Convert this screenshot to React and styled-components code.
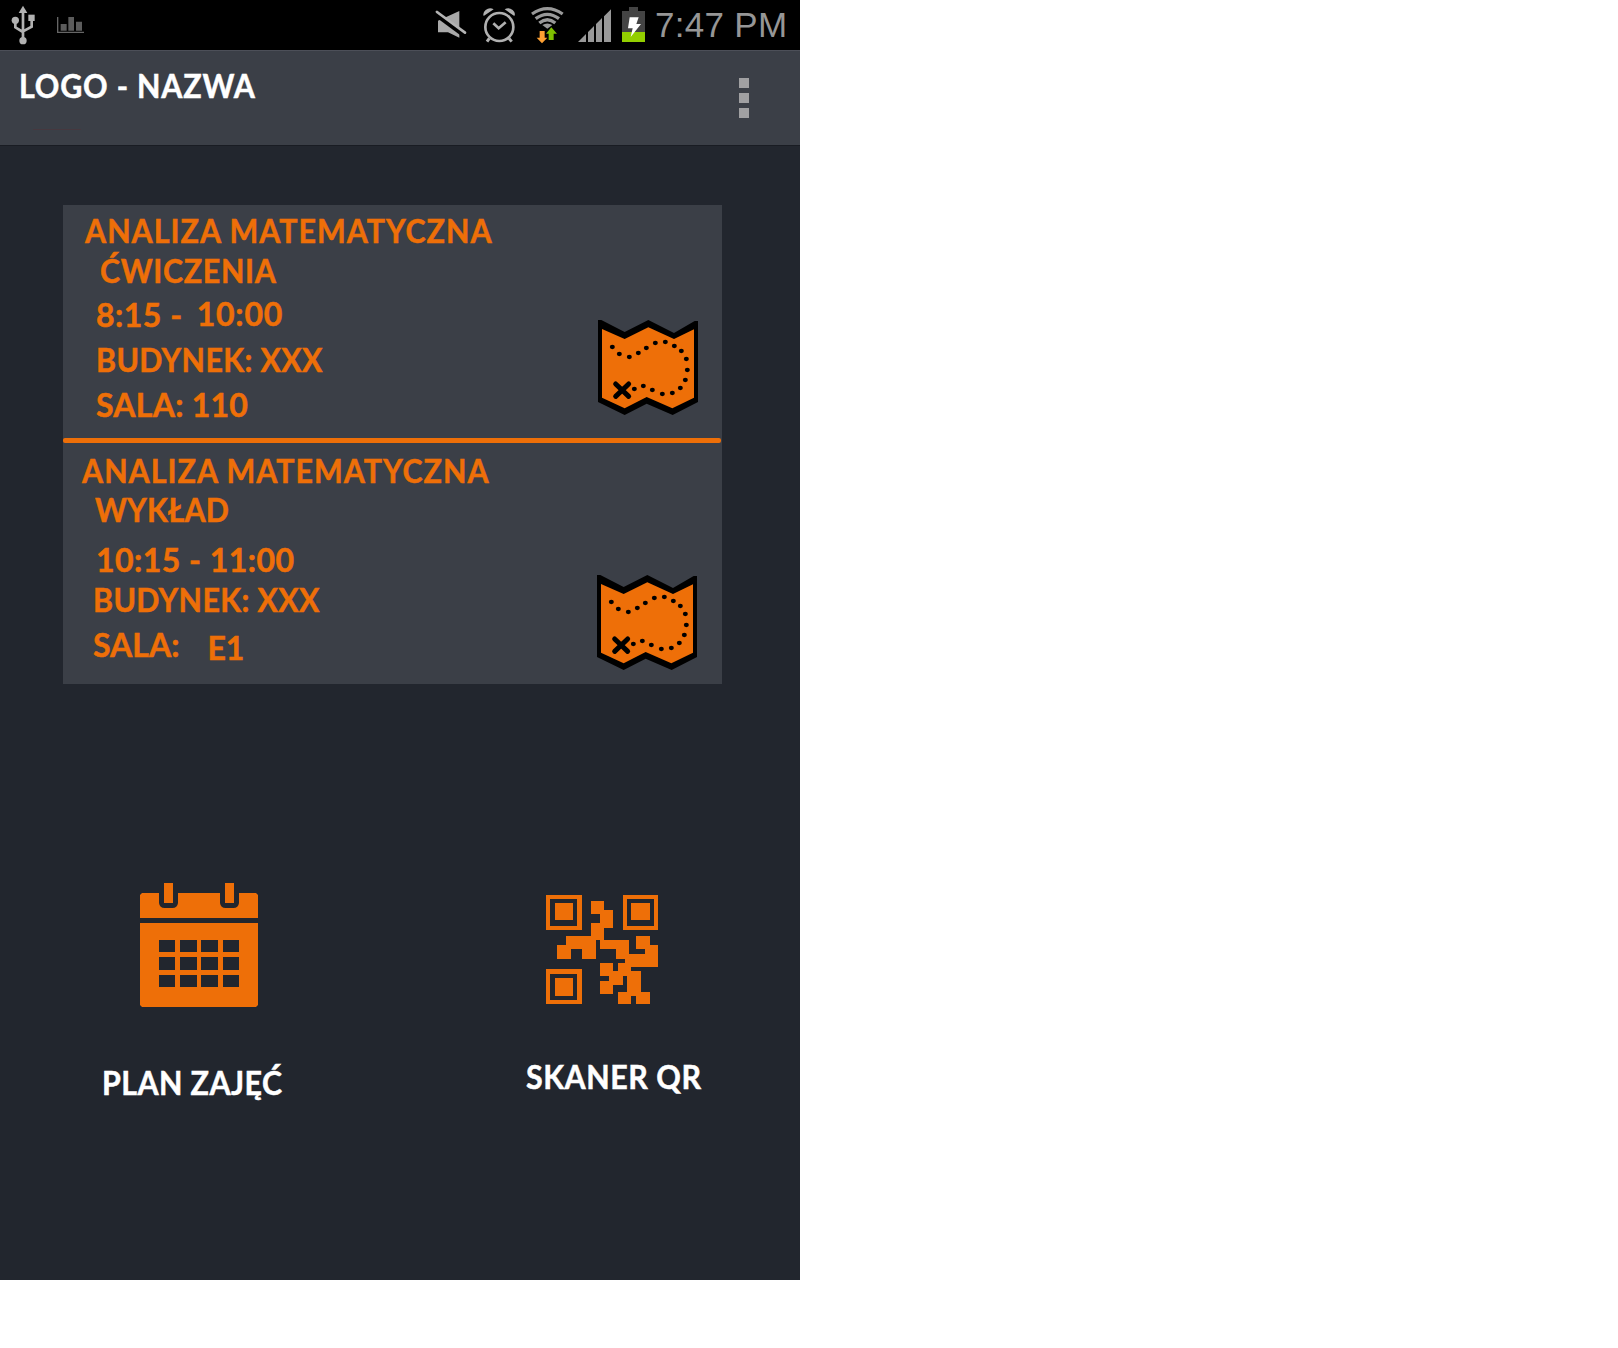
import React from "react";
import styled, { createGlobalStyle } from "styled-components";

const ORANGE = "#ee6f08";
const DARK = "#22262e";
const PANEL = "#3b3f47";

const GlobalStyle = createGlobalStyle`
  body { margin: 0; background: #ffffff; }
`;

const Phone = styled.main`
  width: 800px;
  height: 1280px;
  background: ${DARK};
  font-family: Lato, "Open Sans", sans-serif;
  overflow: hidden;
`;

const StatusBar = styled.header`
  display: flex;
  align-items: flex-start;
  height: 50px;
  background: #000;
`;

const StatusIcon = styled.svg`
  display: block;
  flex: none;
  width: ${(p) => p.$w}px;
  height: 50px;
  margin-left: ${(p) => p.$gap}px;
`;

const Clock = styled.time`
  margin-left: 10px;
  font: 35px/50px "Liberation Sans", Arial, sans-serif;
  letter-spacing: 0.3px;
  color: #969696;
  white-space: pre;
`;

const AppBar = styled.div`
  box-sizing: border-box;
  display: flex;
  justify-content: space-between;
  height: 96px;
  padding: 15px 51px 0 19px;
  background: ${PANEL};
  border-top: 1px solid #4c4f58;
  border-bottom: 1px solid #191c23;
`;

const Text = styled.span`
  display: block;
  font-size: 32px;
  font-weight: 700;
  line-height: 40px;
  letter-spacing: ${(p) => p.$spacing || 0}px;
  -webkit-text-stroke: 0.5px currentColor;
  white-space: pre;
  transform: ${(p) => (p.$narrow ? "scaleX(0.95)" : "none")};
  transform-origin: 0 50%;
`;

const Brand = styled.div`
  display: flex;
  flex-direction: column;
`;

const Title = styled.h1`
  display: flex;
  margin: 0;
  font-size: 32px;
  color: #fff;
`;

const Underline = styled.i`
  width: 48px;
  height: 1px;
  margin: 23px 0 0 14px;
  background: #46383f;
`;

const MenuButton = styled.button`
  display: flex;
  flex-direction: column;
  gap: 5px;
  width: 10px;
  margin: 12px 0 0;
  padding: 0;
  border: 0;
  background: none;
`;

const MenuDot = styled.i`
  width: 10px;
  height: 10px;
  background: #a0a0a2;
`;

const Schedule = styled.section`
  width: 659px;
  margin: 59px 0 0 63px;
  background: ${PANEL};
  color: ${ORANGE};
`;

const Lesson = styled.article`
  display: flex;
  justify-content: space-between;
  box-sizing: border-box;
  height: ${(p) => p.$height}px;
  padding-right: ${(p) => p.$right}px;
`;

const Divider = styled.hr`
  width: 658px;
  height: 5px;
  margin: 0;
  border: 0;
  border-radius: 2px;
  background: ${ORANGE};
`;

const Details = styled.div`
  display: flex;
  flex-direction: column;
`;

const Line = styled.div`
  display: flex;
  height: 40px;
  margin: ${(p) => p.$top || 0}px 0 0 ${(p) => p.$indent}px;
`;

const Value = styled(Text)`
  margin-left: ${(p) => p.$left}px;
  margin-top: ${(p) => p.$shift}px;
`;

const MapSvg = styled.svg`
  display: block;
  flex: none;
  width: 100px;
  height: 95px;
  margin-top: ${(p) => p.$top}px;
`;

const Actions = styled.nav`
  display: flex;
  margin-top: 199px;
  padding-left: 102px;
`;

const Action = styled.a`
  display: flex;
  flex-direction: column;
  width: ${(p) => p.$width}px;
  padding-top: ${(p) => p.$top}px;
  color: #fff;
`;

const ActionIcon = styled.svg`
  display: block;
  width: ${(p) => p.$w}px;
  height: ${(p) => p.$h}px;
  margin: 0 0 ${(p) => p.$below}px ${(p) => p.$left}px;
`;

const DOTS = [
  [97, 141], [118, 162], [148, 171], [175, 159], [199, 144], [226, 129],
  [256, 126], [283, 138], [304, 153], [319, 177], [322, 210], [316, 240],
  [301, 264], [277, 279], [247, 282], [217, 270], [190, 258], [163, 267],
];

function MapIcon({ top }) {
  return (
    <MapSvg $top={top} viewBox="54 60 300 285">
      <path d="M54 60H64L134 96L205 60L282 99L344 63H354V306L278 345L200 311L134 345L54 306Z" fill="#000" />
      <path d="M66 87L134 117L205 82L282 117L342 88V293L277 325L200 291L134 325L66 293Z" fill={ORANGE} />
      <path d="M107 252L146 289M146 252L107 289" stroke="#000" strokeWidth="15" strokeLinecap="round" />
      {DOTS.map(([x, y]) => (
        <ellipse key={x + "-" + y} cx={x} cy={y} rx="7.5" ry="6.5" fill="#000" />
      ))}
    </MapSvg>
  );
}

function StatusIcons() {
  return (
    <>
      <StatusIcon $w={26} $gap={10} viewBox="30 0 78 150">
        <g fill="none" stroke="#b2b2b2" strokeWidth="8">
          <path d="M69 35V115M46 65V82L69 96M95 58V80L69 94" />
        </g>
        <g fill="#b2b2b2">
          <path d="M69 17L82 39H56Z" />
          <circle cx="46" cy="61" r="11" />
          <circle cx="69" cy="122" r="11" />
          <rect x="85" y="44" width="19" height="19" />
        </g>
      </StatusIcon>
      <StatusIcon $w={28} $gap={21} viewBox="171 0 84 150">
        <path d="M173 51V97H252" fill="none" stroke="#666" strokeWidth="4" />
        <path d="M182 72H200V92H182ZM205 51H222V92H205ZM228 65H246V92H228Z" fill="#5c5c5c" />
      </StatusIcon>
      <StatusIcon $w={32} $gap={350} viewBox="45 0 96 150">
        <path d="M54 62L118 33V113L84 97H54Z" fill="#a9a9a9" />
        <path d="M47 41L134 105" stroke="#000" strokeWidth="16" />
        <path d="M51 36L135 98" stroke="#b4b4b4" strokeWidth="8" strokeLinecap="round" />
      </StatusIcon>
      <StatusIcon $w={34} $gap={15} viewBox="186 0 102 150">
        <g fill="none" stroke="#b0b0b0">
          <circle cx="238" cy="81" r="42" strokeWidth="8" />
          <path d="M220 70L236 85L257 67" strokeWidth="8" />
          <path d="M208 115L201 125M267 115L275 125" strokeWidth="9" />
        </g>
        <path d="M191 48Q187 39 197 30Q209 20 221 28L191 48ZM283 48Q288 39 278 30Q266 20 254 28L283 48Z" fill="#b0b0b0" />
      </StatusIcon>
      <StatusIcon $w={34} $gap={14} viewBox="330 0 102 150">
        <g fill="none" stroke="#999" strokeWidth="10">
          <path d="M336 42Q382 10 428 42" />
          <path d="M347 56Q382 30 417 56" />
          <path d="M358 69Q382 50 406 69" />
        </g>
        <path d="M367 75Q382 66 397 75L382 86Z" fill="#999" />
        <path d="M359 93H374V113H382L366 130L350 113H359Z" fill="#fda033" />
        <path d="M386 120H401V101H411L394 82L378 101H386Z" fill="#7fc000" />
      </StatusIcon>
      <StatusIcon $w={34} $gap={14} viewBox="474 0 102 150">
        <path d="M474 126L498 102V126ZM504 126V96L522 78V126ZM528 126V72L546 54V126ZM552 126V49L573 28V126Z" fill="#999" />
      </StatusIcon>
      <StatusIcon $w={23} $gap={10} viewBox="606 0 69 150">
        <path d="M606 33H627V21H654V33H675V96H606Z" fill="#444" />
        <path d="M606 96H675V126H606Z" fill="#93cf00" />
        <path d="M629 52H656L649 72H663L632 111L638 85H624Z" fill="#fff" />
      </StatusIcon>
    </>
  );
}

function CalendarIcon() {
  const cells = [];
  for (const [y, h] of [[210, 36], [261, 39], [315, 36]])
    for (const [x, w] of [[117, 48], [180, 51], [243, 51], [309, 48]])
      cells.push(<rect key={x + "-" + y} x={x} y={y} width={w} height={h} fill={DARK} />);
  return (
    <ActionIcon $w={118} $h={124} $left={38} $below={56} viewBox="60 39 354 372">
      <path d="M66 69H117V99Q119 114 134 114H157Q172 114 174 99V69H300V99Q302 114 317 114H340Q355 114 357 99V69H408L414 75V144H60V75Z" fill={ORANGE} />
      <path d="M60 159H414V405L408 411H66L60 405Z" fill={ORANGE} />
      <path d="M132 39H159V99H132ZM315 39H342V99H315Z" fill={ORANGE} />
      {cells}
    </ActionIcon>
  );
}

function QrIcon() {
  return (
    <ActionIcon $w={112} $h={109} $left={20} $below={53} viewBox="108 45 336 327">
      <g fill={ORANGE} fillRule="evenodd" shapeRendering="crispEdges">
        <path d="M108 45H216V150H108ZM120 57V138H201V57ZM135 69H189V120H135Z" />
        <path d="M339 45H444V150H339ZM351 57V138H432V57ZM363 69H420V120H363Z" />
        <path d="M108 267H216V372H108ZM120 282V360H201V282ZM135 294H189V348H135Z" />
        <path d="M243 63H282V90H309V144H282V180H357V222H405V207H378V168H420V195H444V261H363V273H393V336H420V372H378V348H363V372H324V336H351V288H339V315H309V342H270V303H297V288H270V249H309V273H324V249H345V237H318V207H270V180H258V237H216V207H183V237H141V195H168V168H243V129H270V102H243Z" />
      </g>
    </ActionIcon>
  );
}

export default function App() {
  return (
    <>
      <GlobalStyle />
      <Phone>
        <StatusBar>
          <StatusIcons />
          <Clock>7:47 PM</Clock>
        </StatusBar>
        <AppBar>
          <Brand>
            <Title><Text $narrow $spacing={0.86}>LOGO - NAZWA</Text></Title>
            <Underline />
          </Brand>
          <MenuButton aria-label="Menu"><MenuDot /><MenuDot /><MenuDot /></MenuButton>
        </AppBar>
        <Schedule>
          <Lesson $height={233} $right={24}>
            <Details>
              <Line $top={6} $indent={22}><Text $narrow $spacing={1.07}>ANALIZA MATEMATYCZNA</Text></Line>
              <Line $indent={37}><Text $narrow $spacing={0.68}>ĆWICZENIA</Text></Line>
              <Line $top={4} $indent={33}><Text $spacing={0.5}>8:15 -</Text><Value $spacing={0.8} $left={14} $shift={-1}>10:00</Value></Line>
              <Line $top={5} $indent={33}><Text $narrow $spacing={0.4}>BUDYNEK: XXX</Text></Line>
              <Line $top={5} $indent={33}><Text $spacing={0.25}>SALA: 110</Text></Line>
            </Details>
            <MapIcon top={115} />
          </Lesson>
          <Divider />
          <Lesson $height={241} $right={25}>
            <Details>
              <Line $top={8} $indent={19}><Text $narrow $spacing={1.07}>ANALIZA MATEMATYCZNA</Text></Line>
              <Line $top={-1} $indent={32}><Text $narrow $spacing={0.17}>WYKŁAD</Text></Line>
              <Line $top={10} $indent={33}><Text $spacing={0.47}>10:15 - 11:00</Text></Line>
              <Line $indent={30}><Text $narrow $spacing={0.4}>BUDYNEK: XXX</Text></Line>
              <Line $top={5} $indent={30}><Text>SALA:</Text><Value $left={28} $shift={3}>E1</Value></Line>
            </Details>
            <MapIcon top={132} />
          </Lesson>
        </Schedule>
        <Actions>
          <Action $width={424} $top={0}>
            <CalendarIcon />
            <Text $narrow $spacing={0.44}>PLAN ZAJĘĆ</Text>
          </Action>
          <Action $width={200} $top={12}>
            <QrIcon />
            <Text $narrow $spacing={0.58}>SKANER QR</Text>
          </Action>
        </Actions>
      </Phone>
    </>
  );
}
